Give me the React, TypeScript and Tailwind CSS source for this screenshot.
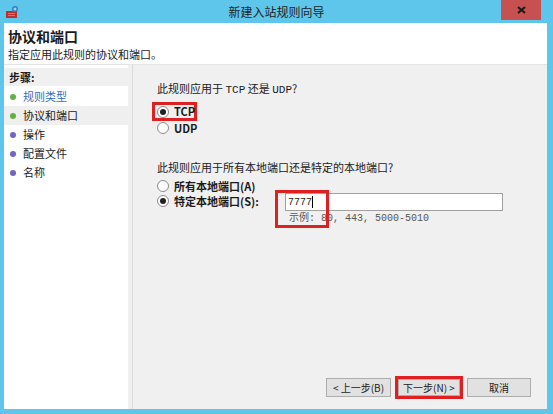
import React from "react";

const cjk = { fontFamily: '"Noto Sans CJK SC", "Liberation Sans", sans-serif' };
const mono = { fontFamily: '"Liberation Mono", "Noto Sans CJK SC", monospace' };

function Radio({ checked }: { checked?: boolean }) {
  return (
    <span className="inline-flex w-[12px] h-[12px] rounded-full border border-[#8a8a8a] bg-white items-center justify-center shrink-0">
      {checked && <span className="w-[6px] h-[6px] rounded-full bg-[#222]" />}
    </span>
  );
}

function Dot({ color }: { color: string }) {
  return <span className={`w-[6px] h-[6px] rounded-full shrink-0 ${color}`} />;
}

export default function App() {
  return (
    <div className="w-[553px] h-[414px] bg-[#5dc6ea] flex flex-col overflow-hidden text-[11px] text-[#1a1a1a]" style={cjk}>
      {/* title bar */}
      <div className="h-[23px] flex items-center relative shrink-0">
        <div className="ml-[5px] w-[14px] h-[14px] relative">
          <svg width="14" height="14" viewBox="0 0 14 14">
            <rect x="1" y="6" width="11" height="7" fill="#b8332f" />
            <rect x="3" y="8" width="7" height="1" fill="#e07060" />
            <rect x="3" y="10" width="7" height="1" fill="#e07060" />
            <circle cx="10" cy="4" r="3" fill="#3a7fc0" />
            <circle cx="10" cy="4" r="1.5" fill="#9fd0f0" />
          </svg>
        </div>
        <div className="absolute inset-x-0 top-0 h-[23px] flex items-center justify-center text-[12px] text-[#1e1e1e]">新建入站规则向导</div>
        <div className="absolute right-[12px] top-0 w-[40px] h-[20px] bg-[#c75050] flex items-center justify-center">
          <svg width="9" height="8" viewBox="0 0 9 8">
            <path d="M1 1 L8 7 M8 1 L1 7" stroke="#1a1a1a" strokeWidth="2" />
          </svg>
        </div>
      </div>
      {/* body */}
      <div className="flex-1 ml-[4px] mr-[6px] mb-[5px] bg-[#f0f0f0] flex flex-col">
        <div className="h-[42px] bg-white pl-[4px] pt-[3px] shrink-0 border-b border-[#e4e4e4]">
          <div className="text-[14px] font-bold leading-[20px]">协议和端口</div>
          <div className="text-[11px] leading-[15px] mt-[1px]">指定应用此规则的协议和端口。</div>
        </div>
        <div className="flex-1 flex">
          <div className="w-[124px] bg-white flex flex-col pt-[3px]">
            <div className="h-[18px] bg-[#f0f0f0] font-bold flex items-center pl-[5px] text-[11px]">步骤:</div>
            <div className="flex flex-col pt-[1px]">
              <div className="h-[19px] flex items-center pl-[6px] gap-[7px] text-[#2f6dbd]"><Dot color="bg-[#5fb046]" />规则类型</div>
              <div className="h-[19px] flex items-center pl-[6px] gap-[7px] bg-[#efefef]"><Dot color="bg-[#5fb046]" />协议和端口</div>
              <div className="h-[19px] flex items-center pl-[6px] gap-[7px]"><Dot color="bg-[#6f66c4]" />操作</div>
              <div className="h-[19px] flex items-center pl-[6px] gap-[7px]"><Dot color="bg-[#6f66c4]" />配置文件</div>
              <div className="h-[19px] flex items-center pl-[6px] gap-[7px]"><Dot color="bg-[#6f66c4]" />名称</div>
            </div>
          </div>
          <div className="w-[5px] border-r border-[#dcdcdc]" />
          <div className="flex-1 flex flex-col pl-[24px] pr-[44px]">
            <div className="mt-[16px] leading-[14px]">此规则应用于 <span style={mono}>TCP</span> 还是 <span style={mono}>UDP</span>?</div>
            <div className="mt-[5px] w-[45px] h-[19px] -ml-[5px] border-[3px] border-[#e02020] flex items-center pl-[2px] gap-[5px] font-bold">
              <Radio checked />TCP
            </div>
            <div className="flex items-center gap-[5px] font-bold h-[14px]"><Radio />UDP</div>
            <div className="mt-[25px] leading-[14px]">此规则应用于所有本地端口还是特定的本地端口?</div>
            <div className="mt-[5px] flex items-center gap-[5px] font-bold h-[14px]"><Radio />所有本地端口(A)</div>
            <div className="flex items-start">
              <div className="flex items-center gap-[5px] font-bold h-[14px] mt-[1px] w-[128px]"><Radio checked />特定本地端口(S):</div>
              <div className="flex-1 relative">
                <div className="h-[18px] bg-white border border-[#a0a0a0] flex items-center pl-[2px] text-[10px]" style={mono}>7777<span className="w-[1px] h-[12px] bg-black" /></div>
                <div className="pl-[4px] text-[10px] text-[#555] leading-[13px] mt-[1px]" style={mono}>示例: 80, 443, 5000-5010</div>
                <div className="absolute -left-[10px] -top-[3px] w-[54px] h-[38px] border-[3px] border-[#e02020]" />
              </div>
            </div>
            <div className="flex-1" />
            <div className="flex justify-end items-center gap-[6px] mb-[10px] -mr-[28px] text-[10px]">
              <div className="w-[65px] h-[19px] border border-[#adadad] bg-[#e1e1e1] flex items-center justify-center">&lt; 上一步(B)</div>
              <div className="w-[68px] h-[23px] border-[3px] border-[#e02020] flex items-center justify-center -mx-[2px]">
                <div className="w-[62px] h-[17px] border border-[#adadad] bg-[#e1e1e1] flex items-center justify-center">下一步(N) &gt;</div>
              </div>
              <div className="w-[64px] h-[19px] border border-[#adadad] bg-[#e1e1e1] flex items-center justify-center">取消</div>
            </div>
          </div>
        </div>
      </div>
    </div>
  );
}
